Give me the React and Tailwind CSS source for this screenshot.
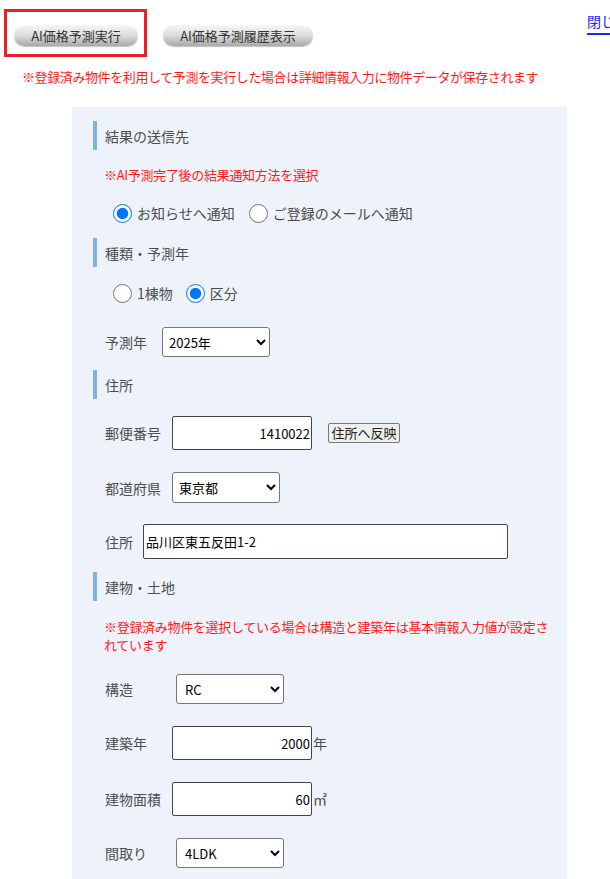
import React from 'react'

const LABEL = 'text-[14px] text-[#4d4d4d] shrink-0'
const SELECT = 'border border-[#767676] rounded-[3px] bg-white text-[13px] text-black pl-[2px] outline-none'
const INPUT = 'border border-[#444] rounded-[2px] bg-white text-[13px] text-black outline-none'

function SectionHead({ title, mt = 'mt-[13px]' }) {
  return (
    <div className={`${mt} ml-[21px] h-[29px] border-l-4 border-[#7fb3e6] pl-[8px] flex items-center text-[14px] text-[#4d4d4d]`}>
      {title}
    </div>
  )
}

function Radio({ name, label, checked, className = '' }) {
  return (
    <label className={`flex items-center ${className}`}>
      <input type="radio" name={name} defaultChecked={checked} className="w-[19px] h-[19px] accent-[#0075ff]" />
      <span className="ml-[5px] text-[14px] text-[#4d4d4d]">{label}</span>
    </label>
  )
}

export default function App() {
  return (
    <div className="w-[610px] min-h-[879px] overflow-hidden bg-white font-['Noto_Sans_CJK_JP','Noto_Sans',sans-serif] leading-[18px]">
      {/* top buttons */}
      <div className="flex items-start pt-[9px] pl-[4px]">
        <div className="border-[3px] border-[#e8202a] w-[143px] h-[48px] pt-[13px] pl-[7px] shrink-0">
          <button className="w-[124px] h-[21px] rounded-full bg-gradient-to-b from-[#f7f7f7] via-[#dcdcdc] to-[#a9a9a9] text-[13px] text-[#333] leading-[21px] shadow-[0_1px_1px_rgba(0,0,0,0.25)]">
            AI価格予測実行
          </button>
        </div>
        <button className="ml-[16px] mt-[16px] w-[150px] h-[21px] shrink-0 rounded-full bg-gradient-to-b from-[#f7f7f7] via-[#dcdcdc] to-[#a9a9a9] text-[13px] text-[#333] leading-[21px] shadow-[0_1px_1px_rgba(0,0,0,0.25)]">
          AI価格予測履歴表示
        </button>
        <a href="#" className="ml-[274px] mt-[3px] shrink-0 whitespace-nowrap text-[14px] text-[#2424ee] border-b-2 border-[#2424ee] pb-[3px]">
          閉じる
        </a>
      </div>

      <p className="mt-[11px] ml-[22px] text-[13px] tracking-[-0.4px] text-[#ff1a1a] whitespace-nowrap">
        ※登録済み物件を利用して予測を実行した場合は詳細情報入力に物件データが保存されます
      </p>

      {/* form panel */}
      <div className="mt-[21px] ml-[72px] w-[495px] bg-[#eef3fb] pt-px pb-[40px]">
        <SectionHead title="結果の送信先" />
        <p className="mt-[16px] ml-[32px] text-[13px] tracking-[-0.3px] text-[#ff1a1a]">
          ※AI予測完了後の結果通知方法を選択
        </p>
        <div className="mt-[19px] ml-[41px] h-[20px] flex items-center">
          <Radio name="notify" label="お知らせへ通知" checked />
          <Radio name="notify" label="ご登録のメールへ通知" className="ml-[14px]" />
        </div>

        <SectionHead title="種類・予測年" mt="mt-[15px]" />
        <div className="mt-[16px] ml-[41px] h-[20px] flex items-center">
          <Radio name="kind" label="1棟物" />
          <Radio name="kind" label="区分" checked className="ml-[13px]" />
        </div>
        <div className="mt-[24px] ml-[33px] flex items-center">
          <span className={`${LABEL} w-[57px]`}>予測年</span>
          <select className={`${SELECT} w-[108px] h-[30px]`} defaultValue="2025">
            <option value="2025">2025年</option>
          </select>
        </div>

        <SectionHead title="住所" />
        <div className="mt-[17px] ml-[33px] flex items-center">
          <span className={`${LABEL} w-[67px]`}>郵便番号</span>
          <input className={`${INPUT} text-right pr-[1px] w-[140px] h-[34px]`} defaultValue="1410022" />
          <button className="ml-[16px] w-[72px] h-[20px] border border-[#767676] rounded-[2px] bg-[#efefef] text-[13px] text-[#222] leading-[18px]">
            住所へ反映
          </button>
        </div>
        <div className="mt-[22px] ml-[33px] flex items-center">
          <span className={`${LABEL} w-[67px]`}>都道府県</span>
          <select className={`${SELECT} w-[108px] h-[31px]`} defaultValue="tokyo">
            <option value="tokyo">東京都</option>
          </select>
        </div>
        <div className="mt-[21px] ml-[33px] flex items-center">
          <span className={`${LABEL} w-[38px]`}>住所</span>
          <input className={`${INPUT} text-left pl-[2px] w-[365px] h-[35px]`} defaultValue="品川区東五反田1-2" />
        </div>

        <SectionHead title="建物・土地" />
        <p className="mt-[17px] ml-[32px] w-[452px] text-[13px] tracking-[-0.3px] leading-[18px] text-[#ff1a1a]">
          ※登録済み物件を選択している場合は構造と建築年は基本情報入力値が設定されています
        </p>
        <div className="mt-[20px] ml-[33px] flex items-center">
          <span className={`${LABEL} w-[71px]`}>構造</span>
          <select className={`${SELECT} w-[108px] h-[30px] pl-[4px]`} defaultValue="rc">
            <option value="rc">RC</option>
          </select>
        </div>
        <div className="mt-[22px] ml-[33px] flex items-center">
          <span className={`${LABEL} w-[67px]`}>建築年</span>
          <input className={`${INPUT} text-right pr-[1px] w-[140px] h-[34px]`} defaultValue="2000" />
          <span className="ml-px text-[14px] text-[#4d4d4d]">年</span>
        </div>
        <div className="mt-[22px] ml-[33px] flex items-center">
          <span className={`${LABEL} w-[67px]`}>建物面積</span>
          <input className={`${INPUT} text-right pr-[1px] w-[140px] h-[34px]`} defaultValue="60" />
          <span className="ml-px text-[14px] text-[#4d4d4d]">㎡</span>
        </div>
        <div className="mt-[22px] ml-[33px] flex items-center">
          <span className={`${LABEL} w-[71px]`}>間取り</span>
          <select className={`${SELECT} w-[108px] h-[30px] pl-[4px]`} defaultValue="4ldk">
            <option value="4ldk">4LDK</option>
          </select>
        </div>
      </div>
    </div>
  )
}
